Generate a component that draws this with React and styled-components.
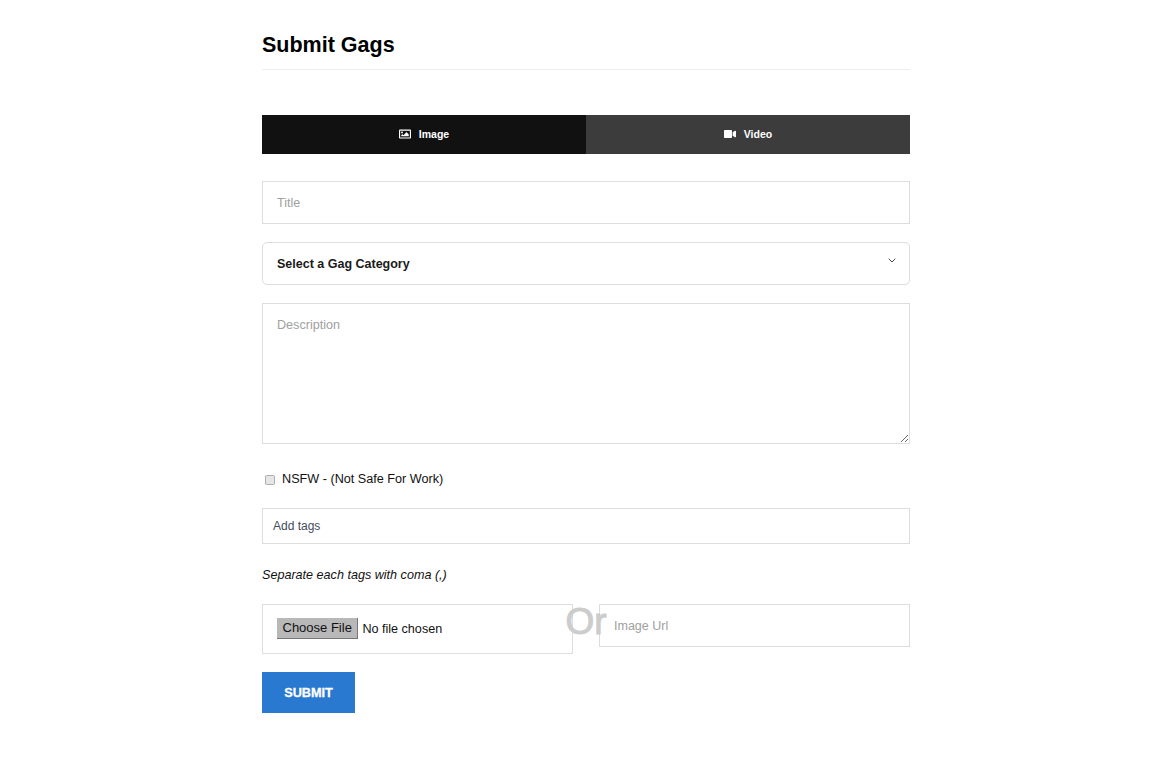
import React from "react";
import styled, { createGlobalStyle } from "styled-components";
import { FaRegImage, FaVideo } from "react-icons/fa";

const GlobalStyle = createGlobalStyle`
  * {
    box-sizing: border-box;
  }
  body {
    margin: 0;
    background: #fff;
    font-family: "Liberation Sans", Arial, sans-serif;
    color: #111;
  }
`;

export default function App() {
  return (
    <>
      <GlobalStyle />
      <Page>
        <Heading>Submit Gags</Heading>
        <Tabs>
          <Tab $active>
            <FaRegImage size={12} />
            <span>Image</span>
          </Tab>
          <Tab>
            <FaVideo size={12} />
            <span>Video</span>
          </Tab>
        </Tabs>
        <TextInput type="text" placeholder="Title" />
        <Select>
          <span>Select a Gag Category</span>
          <Chevron viewBox="0 0 8 5">
            <path d="M0.7 0.7 L4 4 L7.3 0.7" />
          </Chevron>
        </Select>
        <Description placeholder="Description" />
        <CheckRow>
          <CheckBox type="checkbox" id="nsfw" />
          <label htmlFor="nsfw">NSFW - (Not Safe For Work)</label>
        </CheckRow>
        <Tags type="text" placeholder="Add tags" />
        <Hint>Separate each tags with coma (,)</Hint>
        <UploadRow>
          <FileBox>
            <input type="file" />
          </FileBox>
          <Or>Or</Or>
          <UrlInput type="text" placeholder="Image Url" />
        </UploadRow>
        <Submit type="button">SUBMIT</Submit>
      </Page>
    </>
  );
}

const Page = styled.form`
  width: 648px;
  margin: 0 0 0 262px;
  padding: 31px 0 59px;
  display: flex;
  flex-direction: column;
`;

const Heading = styled.h1`
  margin: 0;
  height: 39px;
  border-bottom: 1px solid #eee;
  font-size: 21.5px;
  line-height: 29px;
  font-weight: 700;
  color: #000;
`;

const Tabs = styled.div`
  display: grid;
  grid-template-columns: 1fr 1fr;
  margin-top: 45px;
`;

const Tab = styled.div`
  height: 39px;
  padding-bottom: 1px;
  display: flex;
  align-items: center;
  justify-content: center;
  gap: 8px;
  background: ${(p) => (p.$active ? "#111" : "#3c3c3c")};
  color: #fff;
  font-size: 10.5px;
  font-weight: 700;
`;

const fieldBase = `
  display: block;
  width: 100%;
  background: transparent;
  border: 1px solid #ddd;
  border-radius: 0;
  outline: none;
  font-family: "Liberation Sans", Arial, sans-serif;
  &::placeholder {
    color: #a0a0a0;
    opacity: 1;
  }
`;

const TextInput = styled.input`
  ${fieldBase}
  height: 43px;
  margin-top: 27px;
  padding: 0 14px;
  font-size: 12.5px;
`;

const Select = styled.div`
  height: 43px;
  margin-top: 18px;
  padding: 0 13px 0 14px;
  display: flex;
  align-items: center;
  justify-content: space-between;
  border: 1px solid #ddd;
  border-radius: 5px;
  font-size: 12.5px;
  font-weight: 700;
  color: #1a1a1a;
`;

const Chevron = styled.svg`
  width: 8px;
  height: 5px;
  margin: 0 0 6px;
  fill: none;
  stroke: #444;
  stroke-width: 1;
`;

const Description = styled.textarea`
  ${fieldBase}
  height: 141px;
  margin-top: 18px;
  padding: 14px;
  font-size: 12.6px;
  resize: vertical;
`;

const CheckRow = styled.div`
  display: flex;
  align-items: center;
  margin-top: 26px;
  height: 18px;
  padding-left: 3px;
  font-size: 12.65px;
  color: #111;
`;

const CheckBox = styled.input`
  appearance: none;
  width: 10px;
  height: 10px;
  margin: 1px 7px 0 0;
  background: #e6e6e6;
  border: 1px solid #b0b0b0;
  border-radius: 2px;
`;

const Tags = styled.input`
  ${fieldBase}
  height: 36px;
  margin-top: 20px;
  padding: 0 10px;
  font-size: 12px;
  &::placeholder {
    color: #444c5e;
  }
`;

const Hint = styled.p`
  margin: 24px 0 0;
  height: 14px;
  font-size: 12.6px;
  line-height: 14px;
  font-style: italic;
  color: #111;
`;

const UploadRow = styled.div`
  display: grid;
  grid-template-columns: 311px 26px 311px;
  align-items: start;
  margin-top: 22px;
`;

const FileBox = styled.div`
  height: 50px;
  padding: 0 14px 2px;
  display: flex;
  align-items: center;
  border: 1px solid #ddd;

  input {
    font-family: "Liberation Sans", Arial, sans-serif;
    font-size: 12.6px;
    color: #111;
  }
  input::file-selector-button {
    height: 21px;
    margin-right: 4px;
    padding: 0 5.5px;
    background: #b8b8b8;
    border: 0;
    border-right: 1px solid #777;
    border-bottom: 1px solid #777;
    border-radius: 0;
    font-family: "Liberation Sans", Arial, sans-serif;
    font-size: 13px;
    color: #111;
  }
`;

const Or = styled.div`
  display: flex;
  justify-content: center;
  position: relative;
  z-index: 1;
  font-size: 37px;
  line-height: 36px;
  color: #ccc;
  -webkit-text-stroke: 1px #ccc;
  white-space: nowrap;
`;

const UrlInput = styled.input`
  ${fieldBase}
  height: 43px;
  padding: 0 14px;
  font-size: 12.5px;
`;

const Submit = styled.button`
  width: 93px;
  height: 41px;
  margin-top: 18px;
  padding: 0;
  border: 0;
  background: #2979d1;
  color: #fff;
  font-family: "Liberation Sans", Arial, sans-serif;
  font-size: 12.7px;
  font-weight: 700;
  -webkit-text-stroke: 0.3px #fff;
`;
